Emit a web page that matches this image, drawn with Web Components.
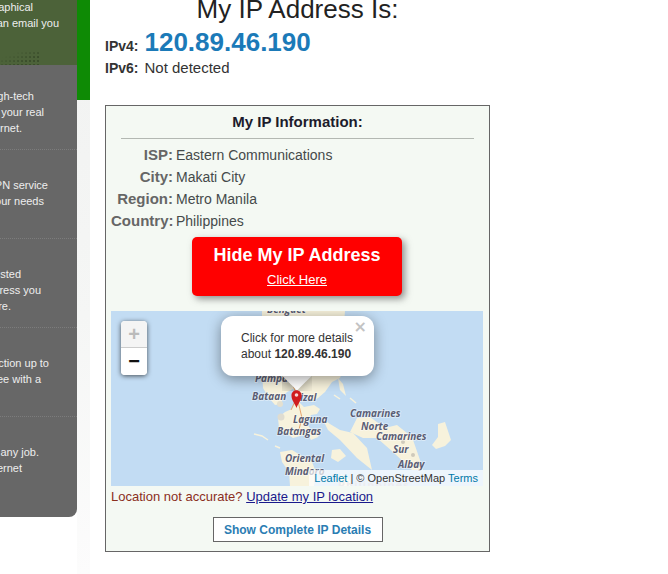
<!DOCTYPE html>
<html>
<head>
<meta charset="utf-8">
<title>My IP Address</title>
<style>
  html, body { margin: 0; padding: 0; background: #fff; }
  body { height: 574px; overflow: hidden; font-family: "Liberation Sans", Arial, sans-serif; }
</style>
</head>
<body>
<ip-page>
  <ip-sidebar slot="side"></ip-sidebar>
  <ip-summary ipv4="120.89.46.190" ipv6="Not detected"></ip-summary>
  <ip-card>
    <ip-row label="ISP">Eastern Communications</ip-row>
    <ip-row label="City">Makati City</ip-row>
    <ip-row label="Region">Metro Manila</ip-row>
    <ip-row label="Country">Philippines</ip-row>
    <ip-hide-button></ip-hide-button>
    <ip-map ip="120.89.46.190"></ip-map>
  </ip-card>
</ip-page>

<script>
class IpPage extends HTMLElement {
  constructor() {
    super();
    this.attachShadow({ mode: 'open' });
    this.shadowRoot.innerHTML = `
      <style>
        :host { display: grid; grid-template-columns: 90px 385px; column-gap: 15px; height: 574px; align-items: start; }
        .main { display: flex; flex-direction: column; }
      </style>
      <slot name="side"></slot>
      <div class="main"><slot></slot></div>
    `;
  }
}

// left column, the page is scrolled so only the line ends show
class IpSidebar extends HTMLElement {
  constructor() {
    super();
    this.attachShadow({ mode: 'open' });
    // [text, x where the line ends]
    const items = [
      [['gh-tech', 34], ['your real', 44], ['rnet.', 22]],
      [['PN service', 48], ['our needs', 44]],
      [['sted', 21], ['ress you', 41], ['re.', 11]],
      [['ction up to', 49], ['ee with a', 41]],
      [['any job.', 39], ['ernet', 22]]
    ];
    const line = ([t, end]) => `<div class="line" style="width:${end}px"><span>${t}</span></div>`;
    this.shadowRoot.innerHTML = `
      <style>
        :host { display: flex; width: 90px; height: 574px; }
        .panel { width: 77px; display: flex; flex-direction: column; font-size: 11px; color: #eee; }
        .line { display: flex; justify-content: flex-end; height: 16px; line-height: 16px; white-space: nowrap; }
        .line span { flex: none; }
        .top { height: 65px; background: #4c6239; overflow: hidden; display: flex; flex-direction: column; justify-content: space-between; }
        .top .inner { margin-top: -1px; }
        .dots { width: 40px; height: 14px; background: radial-gradient(circle, #3a4d2b .7px, transparent 1px) 0 0 / 4px 4px; -webkit-mask: linear-gradient(160deg, transparent 25%, #000 70%); }
        .grey { height: 452px; box-sizing: border-box; padding-top: 23px; background: #676767; border-bottom-right-radius: 8px; overflow: hidden; }
        .item { height: 61px; border-bottom: 1px dotted #7c7c7c; }
        .item + .item { padding-top: 27px; }
        .item:last-child { border-bottom: 0; }
        .side-strip { width: 13px; height: 574px; background: linear-gradient(#f1f2f1, #f5f6f5 55%, #fcfcfc); }
        .stripe { height: 100px; background: #0e8a05; }
      </style>
      <div class="panel">
        <div class="top">
          <div class="inner">
            ${line(['aphical', 33])}
            ${line(['an email you', 59])}
          </div>
          <div class="dots"></div>
        </div>
        <div class="grey">
          ${items.map((i) => `<div class="item">${i.map(line).join('')}</div>`).join('')}
        </div>
      </div>
      <div class="side-strip"><div class="stripe"></div></div>
    `;
  }
}

class IpSummary extends HTMLElement {
  constructor() {
    super();
    this.attachShadow({ mode: 'open' });
  }

  connectedCallback() {
    this.shadowRoot.innerHTML = `
      <style>
        :host { display: block; height: 105px; color: #222; font-size: 14px; }
        h1 { margin: -6px 0 0; height: 31px; width: 385px; font-size: 26px; line-height: 31px; font-weight: 400; text-align: center; color: #222; }
        .row { display: flex; align-items: baseline; gap: 6px; }
        .row.v4 { height: 34px; line-height: 34px; }
        .row.v6 { height: 20px; line-height: 20px; margin-top: -1px; }
        b { color: #333; }
        .val { font-size: 15px; color: #333; }
        .ip { font-size: 26px; font-weight: 700; color: #1b7ab8; }
      </style>
      <h1>My IP Address Is:</h1>
      <div class="row v4"><b>IPv4:</b><span class="ip">${this.getAttribute('ipv4')}</span></div>
      <div class="row v6"><b>IPv6:</b><span class="val">${this.getAttribute('ipv6')}</span></div>
    `;
  }
}

class IpCard extends HTMLElement {
  constructor() {
    super();
    this.attachShadow({ mode: 'open' });
    this.shadowRoot.innerHTML = `
      <style>
        :host { display: block; box-sizing: border-box; width: 385px; height: 447px; border: 1px solid #666; background: #f4f9f3; padding: 0 5px; }
        h3 { margin: 0 10px; height: 32px; line-height: 32px; font-size: 15px; text-align: center; color: #1c1c2c; border-bottom: 1px solid #b3b8b2; }
        .rows { padding-top: 5px; }
        .loc { font-size: 13px; line-height: 20px; margin-top: 1px; color: #8b2f1e; }
        .loc a { color: #1a1a8c; text-decoration: underline; }
        .more { display: flex; justify-content: center; margin-top: 10px; }
        .more span { box-sizing: border-box; width: 170px; height: 25px; line-height: 24px; text-align: center; border: 1px solid #666; background: #fff; color: #2a7db3; font-size: 12px; font-weight: 700; }
      </style>
      <h3>My IP Information:</h3>
      <div class="rows"><slot></slot></div>
      <div class="loc">Location not accurate? <a>Update my IP location</a></div>
      <div class="more"><span>Show Complete IP Details</span></div>
    `;
  }
}

class IpRow extends HTMLElement {
  constructor() {
    super();
    this.attachShadow({ mode: 'open' });
  }

  connectedCallback() {
    this.shadowRoot.innerHTML = `
      <style>
        :host { display: grid; grid-template-columns: 62px 1fr; column-gap: 3px; height: 22px; line-height: 22px; font-size: 14px; color: #454a4a; }
        b { text-align: right; color: #666; font-size: 15px; white-space: nowrap; }
      </style>
      <b>${this.getAttribute('label')}:</b><span><slot></slot></span>
    `;
  }
}

class IpHideButton extends HTMLElement {
  constructor() {
    super();
    this.attachShadow({ mode: 'open' });
    this.shadowRoot.innerHTML = `
      <style>
        :host { display: block; box-sizing: border-box; width: 210px; height: 59px; margin: 5px 0 15px 81px; background: #f00; border-radius: 5px; box-shadow: 3px 3px 7px rgba(60,60,60,.55); color: #fff; text-align: center; }
        .big { font-size: 18px; font-weight: 700; line-height: 22px; padding-top: 7px; }
        .small { font-size: 13px; line-height: 18px; margin-top: 5px; text-decoration: underline; }
      </style>
      <div class="big">Hide My IP Address</div>
      <div class="small">Click Here</div>
    `;
  }
}

// leaflet map, land drawn by hand in page coords (viewBox matches them)
class IpMap extends HTMLElement {
  constructor() {
    super();
    this.attachShadow({ mode: 'open' });
  }

  connectedCallback() {
    const labels = [
      ['Benguet', 267, 313], ['Pampanga', 255, 382], ['Bataan', 252, 400], ['Rizal', 294, 401],
      ['Laguna', 293, 423], ['Batangas', 277, 435], ['Oriental', 285, 462], ['Mindoro', 285, 475],
      ['Camarines', 350, 417], ['Norte', 361, 430], ['Camarines', 376, 440], ['Sur', 393, 453],
      ['Albay', 398, 468]
    ];
    this.shadowRoot.innerHTML = `
      <style>
        :host { display: block; position: relative; width: 372px; height: 175px; overflow: hidden; background: #c2dcf3; font-family: "Liberation Sans", Arial, sans-serif; }
        svg.tiles { display: block; width: 372px; height: 175px; }
        svg.tiles text { font: italic 700 10px "Open Sans", sans-serif; fill: #5a5d74; stroke: rgba(255,255,255,.5); stroke-width: 1.5px; paint-order: stroke; }
        svg.tiles text.country { font-style: normal; fill: #c2c2c6; stroke: none; font-size: 11px; letter-spacing: 1px; }
        .zoom { position: absolute; left: 10px; top: 10px; width: 26px; border-radius: 4px; box-shadow: 0 1px 5px rgba(0,0,0,.65); background: #fff; overflow: hidden; }
        .zoom div { height: 27px; text-align: center; font: 700 20px/26px "Liberation Sans", sans-serif; color: #111; background: #fff; }
        .zoom .off { box-sizing: border-box; color: #bbb; background: #f4f4f4; border-bottom: 1px solid #ccc; }
        .popup { position: absolute; left: 110px; top: 5px; width: 153px; height: 60px; box-sizing: border-box; background: #fff; border-radius: 12px; box-shadow: 0 3px 14px rgba(0,0,0,.4); font-size: 12px; line-height: 16px; color: #333; padding: 14px 0 0 20px; white-space: nowrap; }
        .tip { position: absolute; left: 171px; top: 65px; width: 30px; height: 15px; overflow: hidden; }
        .tip::after { content: ""; position: absolute; left: 4px; top: -12px; width: 22px; height: 22px; background: #fff; transform: rotate(45deg); box-shadow: 0 3px 14px rgba(0,0,0,.4); }
        .close { position: absolute; right: 7px; top: 4px; font: 700 16px/14px Tahoma, "DejaVu Sans", sans-serif; color: #c3c3c3; }
        .pin { position: absolute; left: 180px; top: 79px; }
        .attr { position: absolute; right: 0; bottom: 0; height: 16px; line-height: 16px; padding: 0 5px; font-size: 11px; color: #333; background: rgba(255,255,255,.7); white-space: nowrap; }
        .attr a { color: #0078a8; }
      </style>
      <svg class="tiles" viewBox="111 311 372 175" xmlns="http://www.w3.org/2000/svg">
        <g fill="#f7f2dc">
          <path d="M262 311 L345 311 L343 335 L345 365 L340 378 L332 382 L325 392 L318 398 L312 402 L306 397 L300 392 L293 389 L287 392 L283 396 L281 404 L275 405 L269 398 L263 388 L262 368 Z"/>
          <path d="M338 378 L343 384 L346 396 L340 390 Z"/>
          <path d="M297 400 L304 407 L314 405 L320 409 L317 414 L311 415 L307 424 L312 431 L322 428 L318 437 L311 440 L308 434 L300 436 L293 438 L284 432 L279 428 L278 418 L285 412 L292 409 Z"/>
          <path d="M322 418 L330 424 L340 430 L353 433 L367 448 L372 470 L357 458 L340 440 L328 430 Z"/>
          <path d="M357 418 L370 417 L385 428 L397 425 L412 437 L420 460 L423 470 L412 470 L393 452 L377 438 L363 438 L350 432 Z"/>
          <path d="M438 424 L445 422 L449 434 L451 440 L445 446 L436 449 L432 445 L438 437 Z"/>
          <path d="M280 452 L292 450 L302 456 L312 462 L316 472 L314 486 L290 486 L289 472 L282 462 Z"/>
          <path d="M332 450 L340 449 L346 456 L338 462 L331 458 Z"/>
          <path d="M341 474 L350 480 L350 486 L340 486 Z"/>
        </g>
        <g fill="none" stroke="#f7f2dc" stroke-width="1.5">
          <path d="M254 434 L262 436 L268 440"/>
          <path d="M275 446 L280 448"/>
          <path d="M334 395 L340 399"/>
          <path d="M350 398 L356 403"/>
        </g>
        <g fill="none" stroke="#e9a36b" stroke-width="1">
          <path d="M277 378 L285 381 M293 385 L297 397 L302 418 L298 433"/>
          <path d="M297 397 L291 410"/>
        </g>
        <circle cx="280" cy="404" r="3" fill="#e4e0d0"/>
        <circle cx="281" cy="417" r="3.5" fill="#dfdcd0"/>
        <circle cx="403" cy="442" r="2" fill="#cfcabb"/>
        <circle cx="413" cy="455" r="2" fill="#cfcabb"/>
        <circle cx="418" cy="464" r="3" fill="#cfcabb"/>
        <text class="country" x="338" y="489">Philippines</text>
        ${labels.map(([t, x, y]) => `<text x="${x}" y="${y}">${t}</text>`).join('')}
      </svg>
      <div class="zoom"><div class="off">+</div><div>&minus;</div></div>
      <div class="tip"></div>
      <div class="popup">
        <span class="close">&times;</span>
        Click for more details<br>about <b>${this.getAttribute('ip')}</b>
      </div>
      <svg class="pin" width="11" height="18" viewBox="0 0 12 20" xmlns="http://www.w3.org/2000/svg">
        <path d="M6 20 C4.5 15 .4 11.5 .4 6 C.4 2.8 3 .4 6 .4 C9 .4 11.6 2.8 11.6 6 C11.6 11.5 7.5 15 6 20 Z" fill="#d01c1f"/>
        <circle cx="6" cy="5.5" r="2" fill="#f3d6d6"/>
      </svg>
      <div class="attr"><a>Leaflet</a> | &copy; OpenStreetMap <a>Terms</a></div>
    `;
  }
}

customElements.define('ip-page', IpPage);
customElements.define('ip-sidebar', IpSidebar);
customElements.define('ip-summary', IpSummary);
customElements.define('ip-card', IpCard);
customElements.define('ip-row', IpRow);
customElements.define('ip-hide-button', IpHideButton);
customElements.define('ip-map', IpMap);
</script>
</body>
</html>
